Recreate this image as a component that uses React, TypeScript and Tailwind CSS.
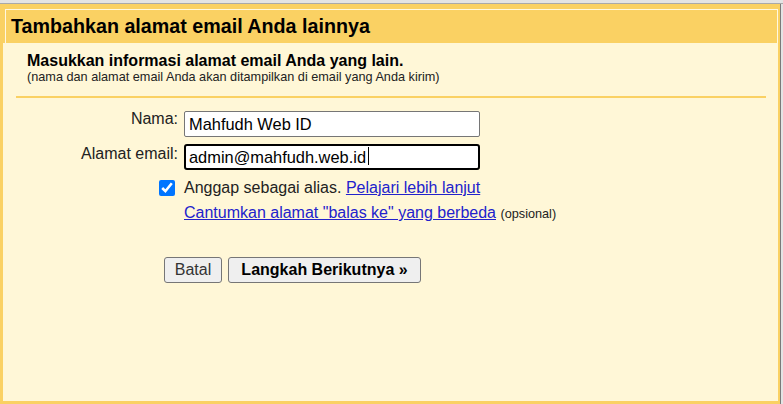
export default function App() {
  return (
    <div className="w-[783px] h-[404px] flex flex-col bg-[#e4e4e4] font-['Liberation_Sans',Arial,sans-serif] text-[#222] overflow-hidden">
      <div className="h-[4px] shrink-0 bg-[#e4e4e4] border-b border-[#a9a9a9]" />
      <div className="flex flex-1 min-h-0">
        <div className="w-[780px] flex flex-col border-l-[3px] border-r-[2px] border-b-[3px] border-[#fad163] bg-[#fff7d7]">
          {/* header */}
          <div className="bg-[#fad163] pt-[5px] pl-[2px]">
            <div className="h-[34px] border-t border-l border-r border-[#fff8e0] pl-[5px] pt-[5px]">
              <h1 className="text-[19.7px] leading-[23px] font-bold text-black">
                Tambahkan alamat email Anda lainnya
              </h1>
            </div>
          </div>

          {/* body */}
          <div className="pt-[9px]">
            <div className="pl-[24px]">
              <h2 className="text-[16px] leading-[18px] font-bold text-black">
                Masukkan informasi alamat email Anda yang lain.
              </h2>
              <p className="text-[12.7px] leading-[15px] text-[#222]">
                (nama dan alamat email Anda akan ditampilkan di email yang Anda kirim)
              </p>
            </div>
            <div className="ml-[13px] mt-[11px] w-[750px] h-[2px] bg-[#fad163]" />

            <div className="mt-[13px] flex flex-col">
              <div className="flex items-start">
                <label className="w-[175px] text-right text-[16px] leading-[16px]">Nama:</label>
                <input
                  readOnly
                  defaultValue="Mahfudh Web ID"
                  className="ml-[6px] w-[296px] h-[26px] border border-[#767676] rounded-[2px] bg-white pl-[4px] text-[16.4px] text-black outline-none font-['Liberation_Sans',Arial,sans-serif]"
                />
              </div>

              <div className="mt-[7px] flex items-start">
                <label className="w-[175px] text-right text-[16px] leading-[16px] mt-[2px]">Alamat email:</label>
                <div className="ml-[6px] relative">
                  <input
                    readOnly
                    defaultValue="admin@mahfudh.web.id"
                    className="w-[296px] h-[26px] border-2 border-black rounded-[3px] bg-white pl-[3px] text-[16.4px] text-black outline-none font-['Liberation_Sans',Arial,sans-serif]"
                  />
                  <span className="absolute left-[184px] top-[3px] w-[1px] h-[18px] bg-black" />
                </div>
              </div>

              <div className="mt-[9px] flex items-center">
                <div className="w-[175px] flex justify-end pr-[3px]">
                  <input
                    type="checkbox"
                    defaultChecked
                    className="m-0 w-[16px] h-[16px] accent-[#0075ff]"
                  />
                </div>
                <span className="ml-[6px] text-[16px] leading-[18px] text-[#222]">
                  Anggap sebagai alias.{" "}
                  <a href="#" className="text-[#2222cc] underline">
                    Pelajari lebih lanjut
                  </a>
                </span>
              </div>

              <div className="mt-[7px] pl-[181px] text-[16px] leading-[18px]">
                <a href="#" className="text-[#2222cc] underline">
                  Cantumkan alamat &quot;balas ke&quot; yang berbeda
                </a>{" "}
                <span className="text-[12.7px] text-[#222]">(opsional)</span>
              </div>

              <div className="mt-[34px] ml-[161px] flex gap-[6px]">
                <button className="w-[58px] h-[26px] bg-[#efefef] border border-[#767676] rounded-[3px] text-[16px] text-[#333]">
                  Batal
                </button>
                <button className="w-[193px] h-[26px] bg-[#efefef] border border-[#767676] rounded-[3px] text-[16px] font-bold text-black">
                  Langkah Berikutnya »
                </button>
              </div>
            </div>
          </div>
        </div>
        <div className="w-[3px] border-l border-[#7a7a7a] bg-[#e4e4e4]" />
      </div>
    </div>
  );
}
